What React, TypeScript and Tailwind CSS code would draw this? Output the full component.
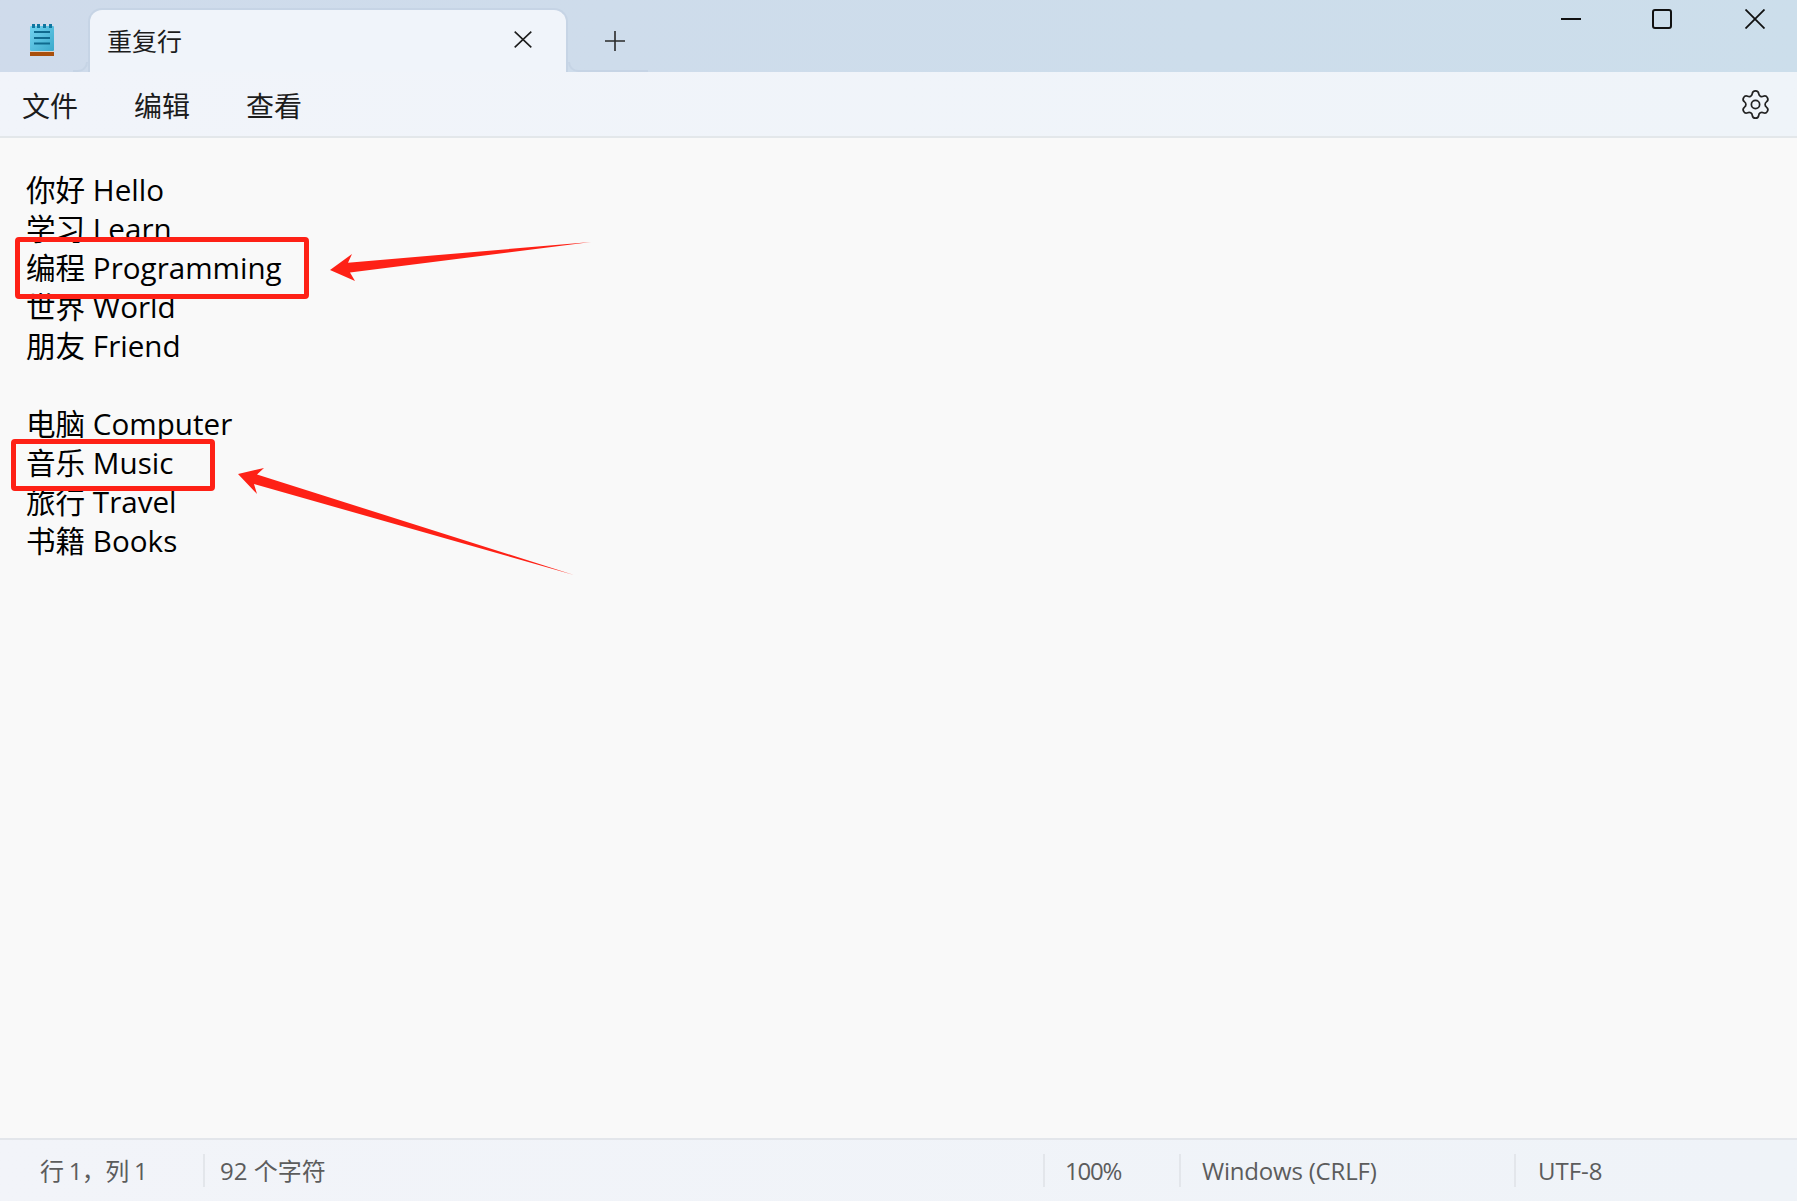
import { Settings } from 'lucide-react';

const FONT = "font-['Open_Sans','Noto_Sans_CJK_SC',sans-serif]";

const lines = [
  '你好 Hello',
  '学习 Learn',
  '编程 Programming',
  '世界 World',
  '朋友 Friend',
  '',
  '电脑 Computer',
  '音乐 Music',
  '旅行 Travel',
  '书籍 Books',
];

function NotepadIcon() {
  return (
    <svg width="24" height="32" viewBox="0 0 24 32" className="shrink-0">
      <defs>
        <linearGradient id="pad" x1="0" y1="0" x2="1" y2="1">
          <stop offset="0" stopColor="#72d3f0" />
          <stop offset="1" stopColor="#3ba9cb" />
        </linearGradient>
      </defs>
      <rect x="0" y="2" width="24" height="25" rx="1" fill="url(#pad)" />
      <rect x="2" y="0" width="3" height="4" fill="#0f76a0" />
      <rect x="7" y="0" width="3" height="4" fill="#0f76a0" />
      <rect x="13" y="0" width="3" height="4" fill="#0f76a0" />
      <rect x="19" y="0" width="3" height="4" fill="#0f76a0" />
      <rect x="4" y="7" width="16" height="2" fill="#0f6a8e" />
      <rect x="4" y="13" width="16" height="2" fill="#0f6a8e" />
      <rect x="4" y="18.5" width="16" height="2" fill="#0f6a8e" />
      <rect x="0" y="27" width="24" height="1" fill="#d8d4cc" />
      <rect x="0" y="28" width="24" height="4" fill="#a94f0c" />
    </svg>
  );
}

function Tab() {
  return (
    <div className="relative ml-[34px] flex h-[64px] w-[480px] shrink-0 items-center rounded-t-[14px] border-2 border-b-0 border-[#c6d4e5] bg-[#f0f4fa] pl-[17px] pr-[34px]">
      <span className="mt-[1px] flex-1 text-[25px] leading-none text-[#1c1c1c]">重复行</span>
      <svg width="18" height="17" viewBox="0 0 18 17" className="mb-[3px]">
        <path d="M0.7 0.7 L17.3 16.3 M17.3 0.7 L0.7 16.3" stroke="#1c1c1c" strokeWidth="1.6" fill="none" />
      </svg>
      <div className="absolute bottom-0 left-[-17px] h-[10px] w-[15px] rounded-br-[10px] border-b-2 border-r-2 border-[#c6d4e5]" />
      <div className="absolute bottom-0 right-[-82px] h-[10px] w-[80px] rounded-bl-[10px] border-b-2 border-l-2 border-[#c6d4e5]" />
    </div>
  );
}

function WindowControls() {
  return (
    <div className="ml-auto flex items-start self-start pt-[9px] text-[#111]">
      <div className="flex h-[20px] w-[20px] items-center">
        <div className="h-[2px] w-[20px] bg-[#111]" />
      </div>
      <div className="ml-[71px] h-[20px] w-[20px] rounded-[3px] border-2 border-[#111]" />
      <svg width="20" height="20" viewBox="0 0 20 20" className="ml-[73px] mr-[32px]">
        <path d="M0.5 0.5 L19.5 19.5 M19.5 0.5 L0.5 19.5" stroke="#111" strokeWidth="1.8" fill="none" />
      </svg>
    </div>
  );
}

function StatusCell({ text, className }: { text: string; className: string }) {
  return (
    <div className={`flex h-[33px] shrink-0 items-center border-l-2 border-[#e3e6eb] ${className}`}>
      <span className="whitespace-nowrap">{text}</span>
    </div>
  );
}

export default function App() {
  return (
    <div className={`relative flex h-[1201px] w-[1797px] flex-col overflow-hidden bg-[#f9f9f9] ${FONT}`}>
      {/* title bar */}
      <div className="flex h-[72px] shrink-0 items-end bg-gradient-to-r from-[#cfdbeb] to-[#ccdeeb]">
        <div className="ml-[30px] self-start pt-[24px]">
          <NotepadIcon />
        </div>
        <Tab />
        <svg width="20" height="20" viewBox="0 0 20 20" className="mb-[21px] ml-[37px]">
          <path d="M10 0 V20 M0 10 H20" stroke="#2a2a2a" strokeWidth="1.6" fill="none" />
        </svg>
        <WindowControls />
      </div>

      {/* menu bar */}
      <div className="flex h-[66px] shrink-0 items-center border-b-2 border-[#e3e7ea] bg-gradient-to-r from-[#f1f4fa] to-[#eff4f9] pl-[22px] pr-[25px] text-[28px] leading-none text-[#1c1c1c]">
        <div className="mt-[4px] flex gap-[56px]">
          <span>文件</span>
          <span>编辑</span>
          <span>查看</span>
        </div>
        <Settings size={33} strokeWidth={1.25} className="ml-auto text-[#222]" />
      </div>

      {/* editor */}
      <div className="flex-1 pl-[26px] pt-[32px] text-[29.6px] leading-[39px] text-black">
        {lines.map((line, i) => (
          <div key={i} className="h-[39px] whitespace-pre">
            {line}
          </div>
        ))}
      </div>

      {/* status bar */}
      <div className="flex h-[63px] shrink-0 items-center border-t-2 border-[#e3e6eb] bg-gradient-to-r from-[#f2f4f9] to-[#eff3f8] text-[24px] leading-none text-[#5c5c5c]">
        <div className="w-[203px] shrink-0 pl-[40px] tracking-[-0.7px]">行 1，列 1</div>
        <StatusCell text="92 个字符" className="w-[840px] pl-[15px]" />
        <StatusCell text="100%" className="w-[136px] pl-[20px] tracking-[-1.2px]" />
        <StatusCell text="Windows (CRLF)" className="w-[335px] pl-[21px] tracking-[-0.2px]" />
        <StatusCell text="UTF-8" className="pl-[22px]" />
      </div>

      {/* annotations */}
      <div className="absolute left-[15px] top-[237px] h-[62px] w-[294px] rounded-[4px] border-[5.5px] border-[#fe2116]" />
      <div className="absolute left-[11px] top-[439px] h-[52px] w-[204px] rounded-[4px] border-[5px] border-[#fe2116]" />
      <svg width="1797" height="1201" className="pointer-events-none absolute left-0 top-0">
        <polygon points="330,270 352,254 348,262.7 591,242 350,272.5 355,281" fill="#fe2116" />
        <polygon points="238,474 264,468 257,474.5 574,575 254,484 257,494" fill="#fe2116" />
      </svg>
    </div>
  );
}
